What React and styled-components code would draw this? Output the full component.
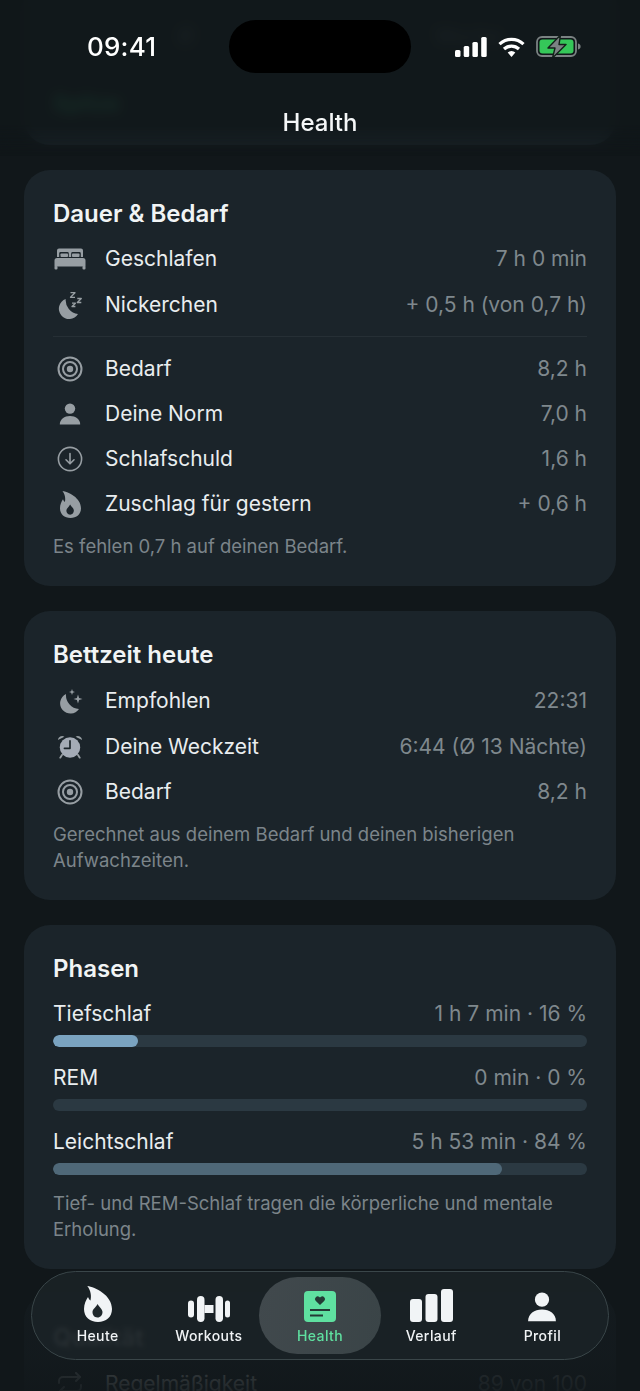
import React from 'react';
import styled, { createGlobalStyle } from 'styled-components';

const GlobalStyle = createGlobalStyle`
    html, body {
        margin: 0;
        padding: 0;
        background: #11171a;
    }
    * {
        box-sizing: border-box;
    }
`;

const Screen = styled.div`
    position: relative;
    width: 640px;
    height: 1391px;
    overflow: hidden;
    background: #11171a;
    font-family: Inter, "Liberation Sans", sans-serif;
    color: #e9edef;
`;

const Feed = styled.main`
    display: flex;
    flex-direction: column;
    gap: 25px;
    padding: 0 24px;
`;

const Card = styled.section`
    background: #1b242a;
    border-radius: 26px;
    padding: 27px 29px ${p => p.$bottom || 27}px;
`;

const TopCard = styled(Card)`
    display: flex;
    flex-direction: column;
    height: 145px;
    padding: 24px 29px 0;
    border-radius: 0 0 26px 26px;
    font-size: 22px;
`;

const TopMeta = styled.div`
    display: flex;
    height: 66px;
    padding-left: 125px;
    gap: 242px;
    color: #7b878c;
    font-size: 20px;
`;

const TopLabel = styled.span`
    color: #45e89a;
    font-weight: 600;
`;

const CardTitle = styled.h2`
    margin: 0 0 ${p => p.$gap || 5}px;
    font-size: 24px;
    line-height: 34px;
    font-weight: 600;
    color: #f1f4f5;
`;

const Row = styled.div`
    display: flex;
    align-items: center;
    height: ${p => p.$h || 45}px;
    font-size: 21px;
    line-height: 30px;
`;

const IconCell = styled.span`
    display: flex;
    align-items: center;
    justify-content: center;
    width: 34px;
    margin-right: 18px;
    color: #979ea3;
`;

const Value = styled.span`
    margin-left: auto;
    color: #7f888d;
    font-size: 21px;
`;

const Divider = styled.hr`
    margin: 8px 0 9px;
    border: 0;
    height: 1px;
    background: #262f35;
`;

const Note = styled.p`
    margin: ${p => p.$top ?? 6}px 0 0;
    font-size: 18.5px;
    line-height: 26px;
    color: #7c858a;
`;

const PhaseHead = styled.div`
    display: flex;
    justify-content: space-between;
    align-items: center;
    height: 30px;
    font-size: 21px;
`;

const Track = styled.div`
    height: 12px;
    margin: 7px 0 15px;
    border-radius: 6px;
    background: #2b3942;
    overflow: hidden;
`;

const Fill = styled.div`
    height: 100%;
    border-radius: 6px;
    background: ${p => p.$color};
`;

const TopShade = styled.div`
    position: absolute;
    inset: 0 0 auto 0;
    height: 156px;
    background: rgba(17, 23, 26, 0.9);
    backdrop-filter: blur(6px);
    -webkit-mask-image: linear-gradient(#000 80%, transparent);
    mask-image: linear-gradient(#000 80%, transparent);
`;

const StatusBar = styled.div`
    position: absolute;
    top: 20px;
    left: 0;
    right: 0;
    height: 53px;
    display: flex;
    align-items: center;
    padding: 0 59px 0 87px;
`;

const Clock = styled.span`
    font-size: 26px;
    font-weight: 500;
    color: #fff;
    letter-spacing: 0.2px;
`;

const Island = styled.div`
    position: absolute;
    left: 229px;
    top: 0;
    width: 182px;
    height: 53px;
    border-radius: 27px;
    background: #000;
`;

const StatusIcons = styled.div`
    margin-left: auto;
    display: flex;
    align-items: center;
    gap: 11px;
`;

const PageTitle = styled.h1`
    position: absolute;
    top: 107px;
    left: 0;
    right: 0;
    margin: 0;
    text-align: center;
    font-size: 24px;
    line-height: 32px;
    font-weight: 500;
    color: #f5f7f8;
`;

const BottomShade = styled.div`
    position: absolute;
    inset: auto 0 0 0;
    height: 122px;
    background: linear-gradient(rgba(17, 23, 26, 0), rgba(17, 23, 26, 0.75) 20%, rgba(17, 23, 26, 0.78) 70%, rgba(17, 23, 26, 0.93));
`;

const TabBar = styled.nav`
    position: absolute;
    left: 31px;
    top: 1271px;
    width: 578px;
    height: 89px;
    padding: 5px 10px;
    display: grid;
    grid-template-columns: repeat(5, 1fr);
    border-radius: 45px;
    border: 1px solid #3a4649;
    background: rgba(29, 37, 41, 0.74);
    backdrop-filter: blur(2px);
`;

const Tab = styled.div`
    display: flex;
    flex-direction: column;
    align-items: center;
    justify-content: flex-end;
    gap: 5px;
    margin: 0 -5.5px;
    padding-bottom: 9px;
    border-radius: 39px;
    font-size: 14px;
    line-height: 18px;
    font-weight: 500;
    letter-spacing: 0.4px;
    color: ${p => (p.$active ? '#5fe0a0' : '#f1f4f6')};
    background: ${p => (p.$active ? 'linear-gradient(100deg, #41494d, #3a4447)' : 'transparent')};
`;

const BedIcon = () => (
    <svg width="32" height="22" viewBox="0 0 32 22" fill="currentColor">
        <path d="M5 .5h22a2 2 0 0 1 2 2v6.5h-2.2v-3.6a1.4 1.4 0 0 0-1.4-1.4h-6.8a1.4 1.4 0 0 0-1.4 1.4v3.6h-2.4v-3.6a1.4 1.4 0 0 0-1.4-1.4h-6.8a1.4 1.4 0 0 0-1.4 1.4v3.6h-2.2v-6.5a2 2 0 0 1 2-2z" />
        <rect x="6.5" y="5.5" width="7.5" height="3.5" rx="0.8" />
        <rect x="18" y="5.5" width="7.5" height="3.5" rx="0.8" />
        <path d="M3 10h26a2.5 2.5 0 0 1 2.5 2.5v6h-31v-6a2.5 2.5 0 0 1 2.5-2.5z" />
        <rect x="0.5" y="18" width="3" height="3.5" rx="1" />
        <rect x="28.5" y="18" width="3" height="3.5" rx="1" />
    </svg>
);

const MoonZzzIcon = () => (
    <svg width="24" height="27" viewBox="0 0 24 27" fill="none">
        <path d="M7.7 7A10.3 10.3 0 1 0 20 22A14 14 0 0 1 7.7 7Z" fill="currentColor" />
        <path d="M12.5 .7h4.5l-4.5 4.6h4.5M19.3 6.5h4l-4 4h4M14 11.2h3.4l-3.4 3.3h3.4" stroke="currentColor" strokeWidth="1.3" strokeLinejoin="round" />
    </svg>
);

const MoonStarsIcon = () => (
    <svg width="25" height="25" viewBox="0 0 25 25" fill="none">
        <path d="M8 5A10.3 10.3 0 1 0 21 20A14 14 0 0 1 8 5Z" fill="currentColor" />
        <path d="M20 5.5l1.1 3.4l3.4 1.1l-3.4 1.1l-1.1 3.4l-1.1-3.4l-3.4-1.1l3.4-1.1zM14 0l.8 2.2l2.2.8l-2.2.8l-.8 2.2l-.8-2.2l-2.2-.8l2.2-.8z" fill="currentColor" />
    </svg>
);

const TargetIcon = () => (
    <svg width="26" height="26" viewBox="0 0 26 26" fill="none" stroke="currentColor" strokeWidth="2">
        <circle cx="13" cy="13" r="11.5" />
        <circle cx="13" cy="13" r="7" />
        <circle cx="13" cy="13" r="3.2" fill="currentColor" stroke="none" />
    </svg>
);

const PersonIcon = ({ size = 22 }) => (
    <svg width={size} height={size} viewBox="0 0 22 22" fill="currentColor">
        <circle cx="11" cy="5.6" r="5.2" />
        <path d="M0.8 21.5c0-5.6 4.6-8.6 10.2-8.6s10.2 3 10.2 8.6z" />
    </svg>
);

const ArrowDownCircleIcon = () => (
    <svg width="26" height="26" viewBox="0 0 26 26" fill="none" stroke="currentColor" strokeWidth="1.6" strokeLinecap="round" strokeLinejoin="round">
        <circle cx="13" cy="13" r="11.6" />
        <path d="M13 7.5v10M9 13.8l4 4l4-4" />
    </svg>
);

const FlameIcon = ({ w = 21, h = 27, hole = '#1b242a' }) => (
    <svg width={w} height={h} viewBox="0 0 28 36">
        <path fill="currentColor" d="M3.3 0C11 1 28 9 28 23C28 31 22 36 14 36C6 36 0 31 0 23C0 18 2 14 4 11C4.8 13 5.5 14 6.5 14.5C7.5 10 7 5 3.3 0Z" />
        <path fill={hole} d="M13.5 31.5C10 31.5 8.5 28.5 8.5 26C8.5 23 12 21.5 13.5 18C15 21 18.5 23 18.5 26C18.5 29 16.5 31.5 13.5 31.5Z" />
    </svg>
);

const AlarmIcon = () => (
    <svg width="26" height="27" viewBox="0 0 28 28" fill="currentColor">
        <path d="M1 7a4.5 4.5 0 0 1 7-3.6zM27 7a4.5 4.5 0 0 0-7-3.6z" />
        <circle cx="14" cy="15" r="11" fill="#a4abb6" />
        <path d="M14 8v8h-6" fill="none" stroke="#1b242a" strokeWidth="1.8" strokeLinecap="round" strokeLinejoin="round" />
        <path d="M5.5 23l-2 3M22.5 23l2 3" stroke="currentColor" strokeWidth="2" strokeLinecap="round" />
    </svg>
);

const RepeatIcon = () => (
    <svg width="26" height="24" viewBox="0 0 26 24" fill="none" stroke="currentColor" strokeWidth="2" strokeLinecap="round" strokeLinejoin="round">
        <path d="M19 1l4 4l-4 4" />
        <path d="M2 11v-2a4 4 0 0 1 4-4h17" />
        <path d="M7 23l-4-4l4-4" />
        <path d="M24 13v2a4 4 0 0 1-4 4H3" />
    </svg>
);

const DumbbellIcon = () => (
    <svg width="42" height="26" viewBox="0 0 42 26" fill="currentColor">
        <rect x="0" y="4.5" width="6" height="17" rx="3" />
        <rect x="9" y="0" width="7.5" height="26" rx="3.7" />
        <rect x="16.5" y="9" width="9" height="8" />
        <rect x="27.5" y="0" width="7.5" height="26" rx="3.7" />
        <rect x="37" y="4.5" width="5" height="17" rx="2.5" />
    </svg>
);

const HealthCardIcon = () => (
    <svg width="32" height="31" viewBox="0 0 32 31">
        <rect width="32" height="31" rx="4" fill="currentColor" />
        <path d="M16 14l-4.4-4.2a2.7 2.7 0 0 1 3.8-3.8l.6.6l.6-.6a2.7 2.7 0 0 1 3.8 3.8z" fill="#243a35" />
        <path d="M6 19h20M6 24.5h13" stroke="#243a35" strokeWidth="2" />
    </svg>
);

const BarsIcon = () => (
    <svg width="43" height="33" viewBox="0 0 43 33" fill="currentColor">
        <rect x="0" y="10" width="12" height="23" rx="3" />
        <rect x="15.5" y="5" width="12" height="28" rx="3" />
        <rect x="31" y="0" width="12" height="33" rx="3" />
    </svg>
);

const SignalIcon = () => (
    <svg width="32" height="20" viewBox="0 0 32 20" fill="#fff">
        <rect x="0" y="13" width="5.5" height="7" rx="1.5" />
        <rect x="8.7" y="9" width="5.5" height="11" rx="1.5" />
        <rect x="17.4" y="5" width="5.5" height="15" rx="1.5" />
        <rect x="26.2" y="0" width="5.5" height="20" rx="1.5" />
    </svg>
);

const WifiIcon = () => (
    <svg width="27" height="20" viewBox="0 0 27 20" fill="none" stroke="#fff" strokeWidth="3.2">
        <path d="M1.5 7.2a17.5 17.5 0 0 1 24 0" />
        <path d="M6 12a11 11 0 0 1 15 0" />
        <path d="M13.5 20l-3.8-4.4a5.4 5.4 0 0 1 7.6 0z" fill="#fff" stroke="none" />
    </svg>
);

const BatteryIcon = () => (
    <svg width="45" height="21" viewBox="0 0 45 21">
        <rect x="1" y="1" width="39" height="19" rx="5" fill="none" stroke="#7b8283" strokeWidth="1.8" />
        <rect x="3.5" y="3.5" width="34" height="14" rx="3" fill="#35c759" />
        <path d="M42 7.5c2 .5 2.6 1.6 2.6 3s-.6 2.5-2.6 3z" fill="#7b8283" />
        <path d="M24.5 -1L12 12h7l-2.5 10L30 8.5h-7z" fill="#7b8283" stroke="#14201b" strokeWidth="1.4" strokeLinejoin="round" />
    </svg>
);

const sleepRows = [
    { icon: <BedIcon />, label: 'Geschlafen', value: '7 h 0 min', h: 46 },
    { icon: <MoonZzzIcon />, label: 'Nickerchen', value: '+ 0,5 h (von 0,7 h)', h: 46 },
];

const needRows = [
    { icon: <TargetIcon />, label: 'Bedarf', value: '8,2 h', h: 45 },
    { icon: <PersonIcon />, label: 'Deine Norm', value: '7,0 h', h: 45 },
    { icon: <ArrowDownCircleIcon />, label: 'Schlafschuld', value: '1,6 h', h: 45 },
    { icon: <FlameIcon />, label: 'Zuschlag für gestern', value: '+ 0,6 h', h: 46 },
];

const bedtimeRows = [
    { icon: <MoonStarsIcon />, label: 'Empfohlen', value: '22:31', h: 46 },
    { icon: <AlarmIcon />, label: 'Deine Weckzeit', value: '6:44 (Ø 13 Nächte)', h: 45 },
    { icon: <TargetIcon />, label: 'Bedarf', value: '8,2 h', h: 45 },
];

const phases = [
    { label: 'Tiefschlaf', value: '1 h 7 min · 16 %', pct: 16, color: '#7aa3c0' },
    { label: 'REM', value: '0 min · 0 %', pct: 0, color: '#7aa3c0' },
    { label: 'Leichtschlaf', value: '5 h 53 min · 84 %', pct: 84, color: '#4f6878' },
];

const tabs = [
    { label: 'Heute', icon: <FlameIcon w={28} h={36} hole="#1f282c" /> },
    { label: 'Workouts', icon: <DumbbellIcon /> },
    { label: 'Health', icon: <HealthCardIcon />, active: true },
    { label: 'Verlauf', icon: <BarsIcon /> },
    { label: 'Profil', icon: <PersonIcon size={30} /> },
];

const InfoRow = ({ icon, label, value, h }) => (
    <Row $h={h}>
        <IconCell>{icon}</IconCell>
        {label}
        <Value>{value}</Value>
    </Row>
);

export default function App() {
    return (
        <Screen>
            <GlobalStyle />
            <Feed>
                <TopCard>
                    <TopMeta>
                        <span>Ø</span>
                        <span>Woche</span>
                    </TopMeta>
                    <TopLabel>Spitze</TopLabel>
                </TopCard>

                <Card>
                    <CardTitle>Dauer &amp; Bedarf</CardTitle>
                    {sleepRows.map(r => <InfoRow key={r.label} {...r} />)}
                    <Divider />
                    {needRows.map(r => <InfoRow key={r.label} {...r} />)}
                    <Note>Es fehlen 0,7 h auf deinen Bedarf.</Note>
                </Card>

                <Card>
                    <CardTitle $gap={6}>Bettzeit heute</CardTitle>
                    {bedtimeRows.map(r => <InfoRow key={r.label} {...r} />)}
                    <Note $top={7}>Gerechnet aus deinem Bedarf und deinen bisherigen Aufwachzeiten.</Note>
                </Card>

                <Card>
                    <CardTitle $gap={12}>Phasen</CardTitle>
                    {phases.map(p => (
                        <div key={p.label}>
                            <PhaseHead>
                                {p.label}
                                <Value>{p.value}</Value>
                            </PhaseHead>
                            <Track>
                                <Fill $color={p.color} style={{ width: `${p.pct}%` }} />
                            </Track>
                        </div>
                    ))}
                    <Note $top={0}>Tief- und REM-Schlaf tragen die körperliche und mentale Erholung.</Note>
                </Card>

                <Card>
                    <CardTitle $gap={6}>Qualität</CardTitle>
                    <Row>
                        <IconCell><RepeatIcon /></IconCell>
                        Regelmäßigkeit
                        <Value>89 von 100</Value>
                    </Row>
                </Card>
            </Feed>

            <TopShade />
            <StatusBar>
                <Clock>09:41</Clock>
                <Island />
                <StatusIcons>
                    <SignalIcon />
                    <WifiIcon />
                    <BatteryIcon />
                </StatusIcons>
            </StatusBar>
            <PageTitle>Health</PageTitle>

            <BottomShade />
            <TabBar>
                {tabs.map(t => (
                    <Tab key={t.label} $active={t.active}>
                        {t.icon}
                        {t.label}
                    </Tab>
                ))}
            </TabBar>
        </Screen>
    );
}
